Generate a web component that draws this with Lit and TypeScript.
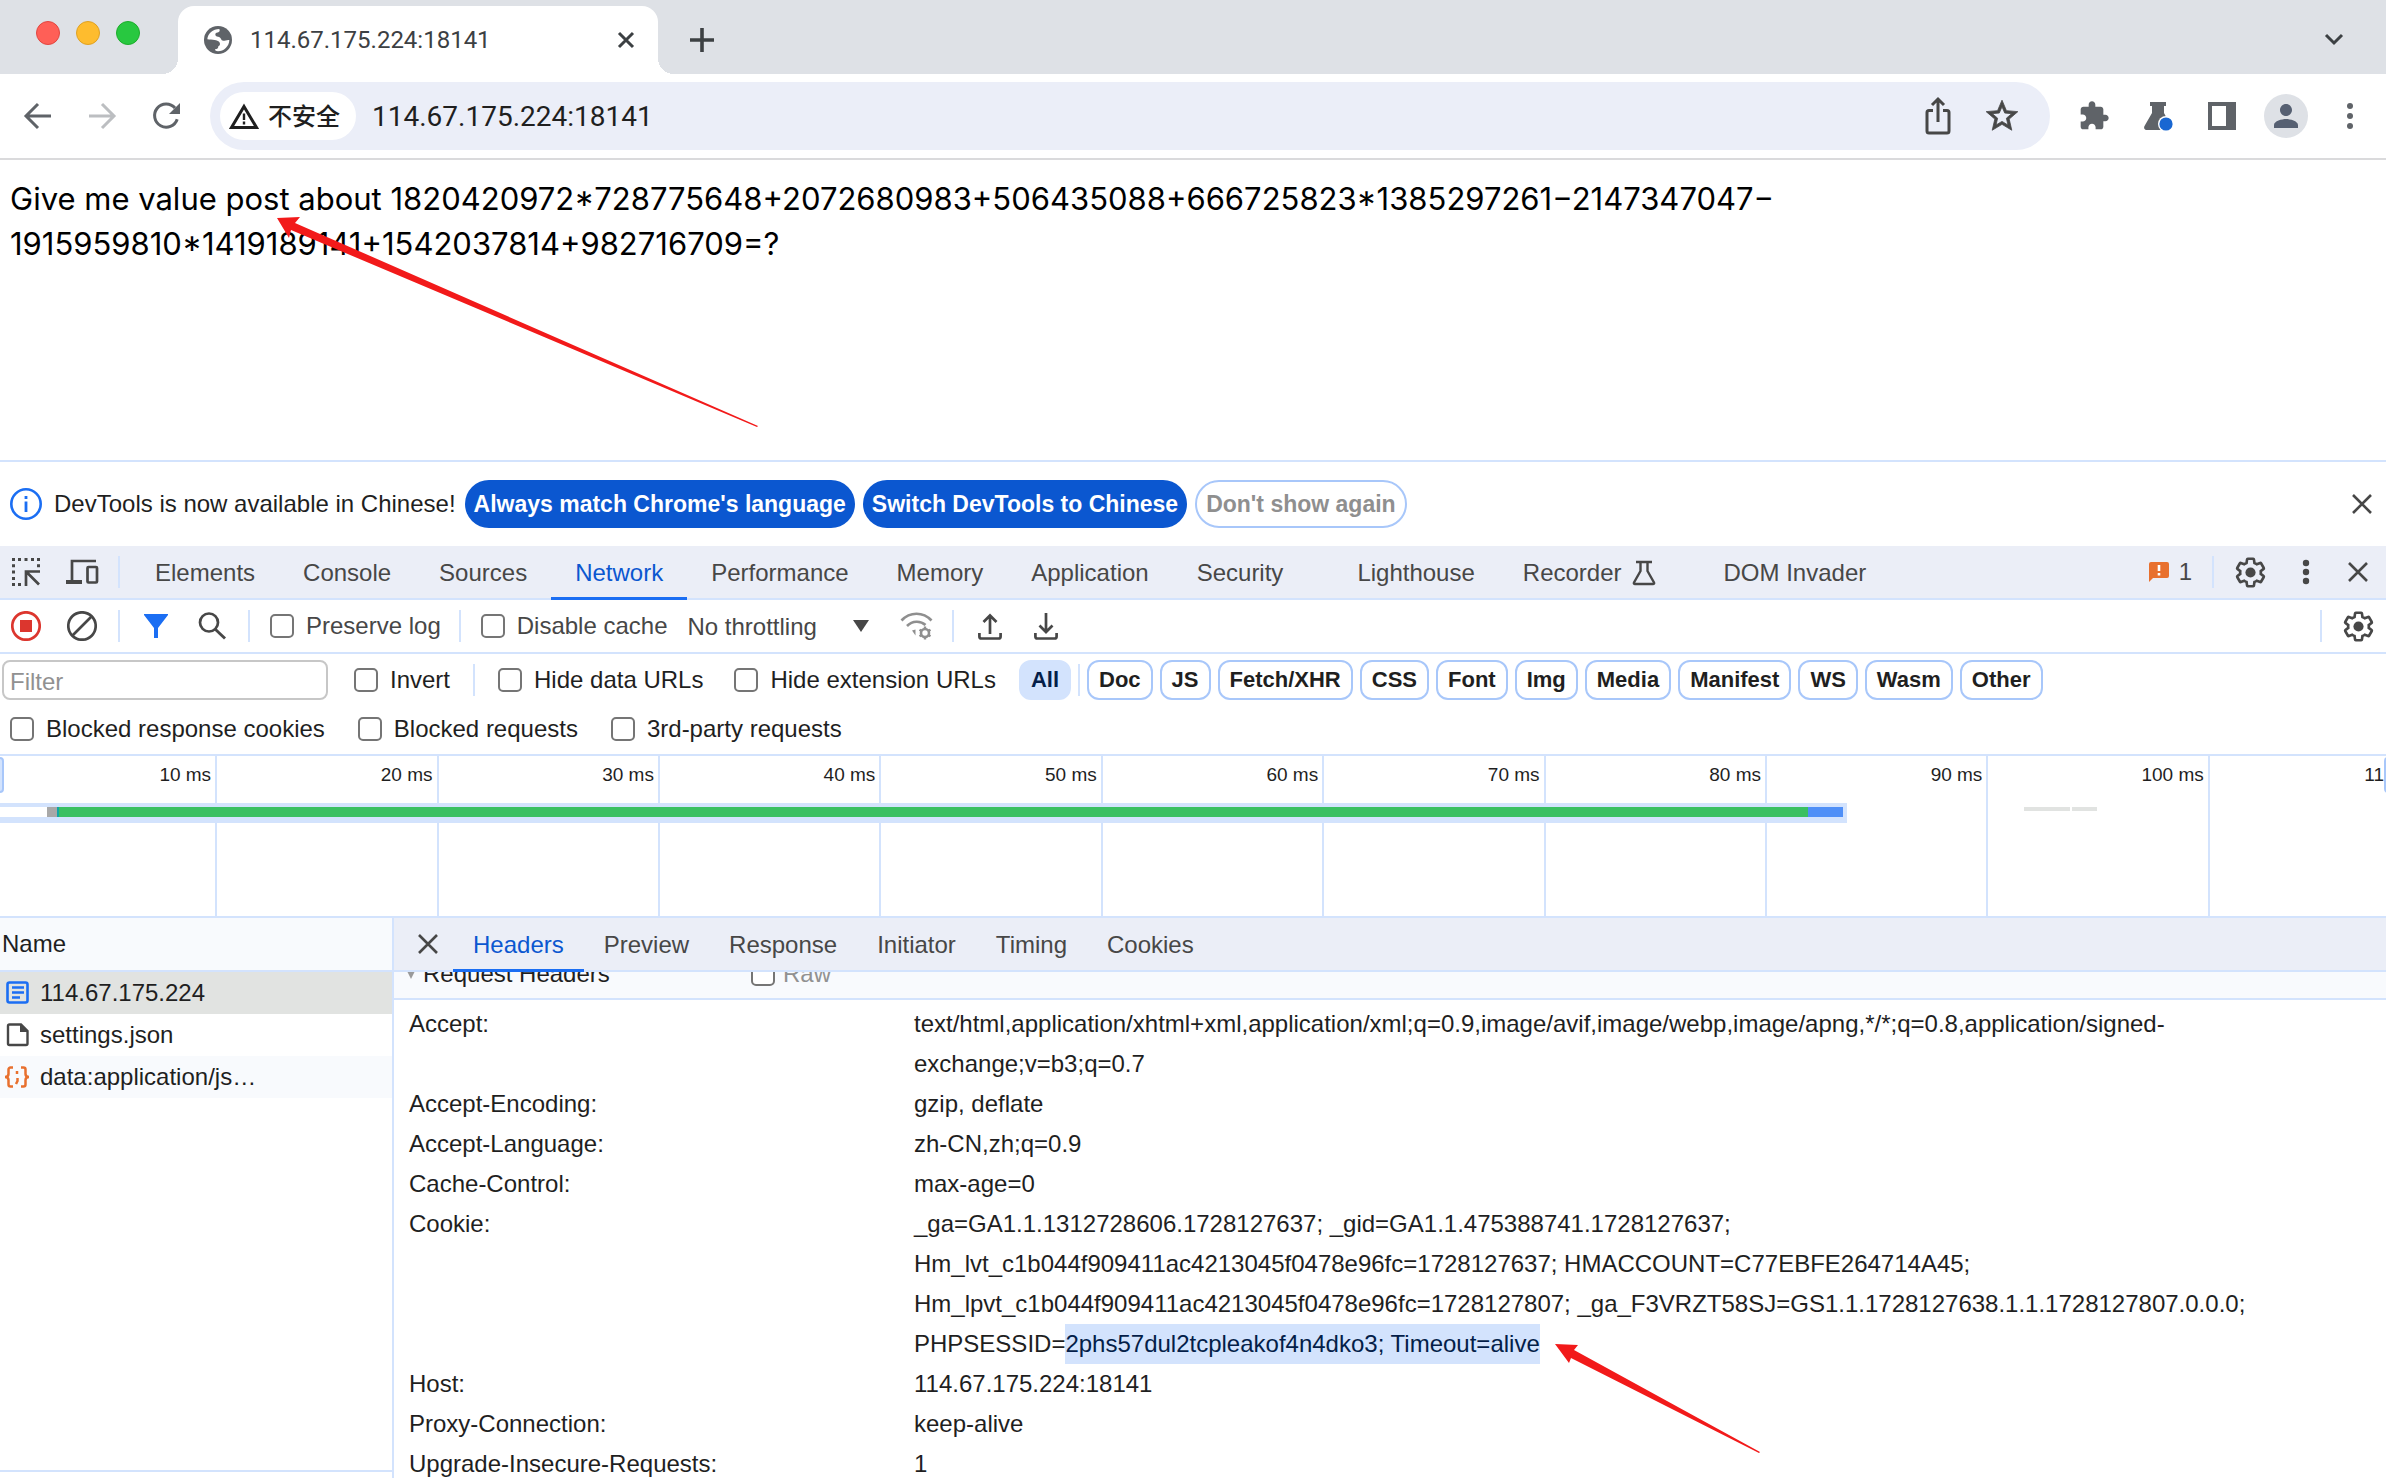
import { LitElement, html, css, svg, nothing } from "lit";
import type { TemplateResult } from "lit";
import { customElement } from "lit/decorators.js";
import { classMap } from "lit/directives/class-map.js";

const GEAR =
  "M19.43 12.98c.04-.32.07-.64.07-.98 0-.34-.03-.66-.07-.98l2.11-1.65c.19-.15.24-.42.12-.64l-2-3.46c-.09-.16-.26-.25-.44-.25-.06 0-.12.01-.17.03l-2.49 1c-.52-.4-1.08-.73-1.69-.98l-.38-2.65C14.46 2.18 14.25 2 14 2h-4c-.25 0-.46.18-.49.42l-.38 2.65c-.61.25-1.17.59-1.69.98l-2.49-1c-.06-.02-.12-.03-.18-.03-.17 0-.34.09-.43.25l-2 3.46c-.13.22-.07.49.12.64l2.11 1.65c-.04.32-.07.65-.07.98 0 .33.03.66.07.98l-2.11 1.65c-.19.15-.24.42-.12.64l2 3.46c.09.16.26.25.44.25.06 0 .12-.01.17-.03l2.49-1c.52.4 1.08.73 1.69.98l.38 2.65c.03.24.24.42.49.42h4c.25 0 .46-.18.49-.42l.38-2.65c.61-.25 1.17-.59 1.69-.98l2.49 1c.06.02.12.03.18.03.17 0 .34-.09.43-.25l2-3.46c.12-.22.07-.49-.12-.64l-2.11-1.65z";

const icon = (w: number, h: number, body: TemplateResult, box = `0 0 ${w} ${h}`) =>
  html`<svg width=${w} height=${h} viewBox=${box} fill="none" stroke="none" aria-hidden="true">${body}</svg>`;

const ICONS = {
  globe: icon(28, 28, svg`<circle cx="42" cy="42" r="42" fill="#5f6368"/><path fill="#fff" d="M10 40C11 22 27 9 46 9C49 15 46 20 38 20C31 22 34 32 42 32C52 32 50 44 58 44C65 45 71 42 76 42C76 61 59 76 42 76C36 76 33 74 33 70C40 70 43 66 43 61C49 59 49 52 46 48C40 42 26 42 10 40Z"/>`, "0 0 84 84"),
  tabClose: icon(18, 18, svg`<path d="M2 2l14 14M16 2L2 16" stroke="#3c4043" stroke-width="3"/>`),
  plus: icon(24, 24, svg`<path d="M12 0v24M0 12h24" stroke="#3c4043" stroke-width="3.600"/>`),
  chevron: icon(20, 14, svg`<path d="M2 2l8 8 8-8" stroke="#3c4043" stroke-width="3"/>`),
  back: icon(32, 32, svg`<path d="M29 16H5M16 4L4 16l12 12" stroke="#5f6368" stroke-width="3"/>`),
  forward: icon(32, 32, svg`<path d="M3 16h24M16 4l12 12-12 12" stroke="#bcbec1" stroke-width="3"/>`),
  reload: icon(32, 32, svg`<path d="M27.2 19.2A11.6 11.6 0 1 1 25 8" stroke="#5f6368" stroke-width="3"/><path d="M30 3v11H19z" fill="#5f6368"/>`),
  warning: icon(30, 26, svg`<path d="M15 3.5L27.5 24.500H2.500z" stroke="#1f1f1f" stroke-width="3"/><path d="M15 10.500v6.500M15 18.500v3" stroke="#1f1f1f" stroke-width="2.400"/>`),
  share: icon(28, 40, svg`<path d="M9 14.500H5a2 2 0 0 0-2 2V35a2 2 0 0 0 2 2h18a2 2 0 0 0 2-2V16.500a2 2 0 0 0-2-2h-4" stroke="#474747" stroke-width="3"/><path d="M14 26V4M8 9l6-6 6 6" stroke="#474747" stroke-width="3"/>`),
  star: icon(38, 38, svg`<path stroke="#474747" stroke-width=".5" fill="#474747" d="M22 9.240l-7.190-.62L12 2 9.190 8.630 2 9.240l5.460 4.730L5.820 21 12 17.270 18.180 21l-1.630-7.030L22 9.240zM12 15.400l-3.760 2.270 1-4.280-3.320-2.880 4.380-.38L12 6.100l1.710 4.040 4.380.38-3.320 2.880 1 4.280L12 15.400z"/>`, "0 0 24 24"),
  puzzle: icon(32, 32, svg`<path fill="#5f6368" d="M20.5 11H19V7c0-1.100-.9-2-2-2h-4V3.500C13 2.120 11.880 1 10.500 1S8 2.120 8 3.500V5H4c-1.100 0-1.990.9-1.990 2v3.800H3.500c1.490 0 2.700 1.210 2.700 2.700s-1.210 2.700-2.700 2.700H2V20c0 1.100.9 2 2 2h3.800v-1.500c0-1.490 1.210-2.700 2.700-2.700 1.490 0 2.700 1.210 2.700 2.700V22H17c1.100 0 2-.9 2-2v-4h1.500c1.380 0 2.500-1.120 2.500-2.500S21.880 11 20.500 11z"/>`, "0 0 24 24"),
  labs: icon(32, 32, svg`<path fill="#5f6368" d="M8 2h16v4h-2v7l7 13c1 2 0 4-2 4H5c-2.500 0-3.500-2-2.500-4L10 13V6H8z"/><circle cx="24" cy="24" r="8" fill="#fff"/><circle cx="24" cy="24" r="6.600" fill="#1967d2"/>`),
  sidePanel: icon(28, 28, svg`<path fill="#5f6368" fill-rule="evenodd" d="M0 0h28v28H0zM4 4v20h14V4z"/>`),
  person: icon(36, 36, svg`<path fill="#566072" d="M12 12c2.210 0 4-1.790 4-4s-1.790-4-4-4-4 1.790-4 4 1.790 4 4 4zm0 2c-2.670 0-8 1.340-8 4v2h16v-2c0-2.660-5.330-4-8-4z"/>`, "0 0 24 24"),
  dots: icon(8, 28, svg`<g fill="#5f6368"><circle cx="4" cy="4" r="3"/><circle cx="4" cy="14" r="3"/><circle cx="4" cy="24" r="3"/></g>`),
  info: icon(32, 32, svg`<circle cx="16" cy="16" r="14.700" stroke="#1b6ef3" stroke-width="2.600"/><path d="M16 13.500V24M16 8v3" stroke="#1b6ef3" stroke-width="2.800"/>`),
  close: icon(20, 20, svg`<path d="M1 1l18 18M19 1L1 19" stroke="#474747" stroke-width="2.600"/>`),
  inspect: icon(28, 28, svg`<path fill="#474747" d="M0 0h3v3H0zM6 0h3v3H6zM12.500 0h3v3h-3zM19 0h3v3h-3zM25 0h3v3h-3zM0 6.300h3v3H0zM0 12.500h3v3H0zM0 19h3v3H0zM0 25h3v3H0zM6 25h3v3H6zM25 6.300h3v3h-3z"/><path d="M28 13.500H14V28M14.500 14L27 26.500" stroke="#474747" stroke-width="2.700"/>`),
  device: icon(33, 26, svg`<path d="M30 2H6v20M0 22.500h16" stroke="#474747" stroke-width="2.700"/><path d="M0 21h16v4H0z" fill="#474747"/><rect x="21.500" y="8" width="9.500" height="15.500" rx="1" stroke="#474747" stroke-width="2.700"/>`),
  gear: icon(33, 33, svg`<path d=${GEAR} stroke="#474747" stroke-width="1.900"/><circle cx="12" cy="12" r="3.700" fill="#474747"/>`, "0 0 24 24"),
  menu: icon(8, 28, svg`<g fill="#474747"><circle cx="4" cy="5" r="3.200"/><circle cx="4" cy="14" r="3.200"/><circle cx="4" cy="23" r="3.200"/></g>`),
  flask: icon(24, 26, svg`<path d="M4 2h16M8.500 2v9L2 22.500c-.5 1 0 1.500 1 1.500h18c1 0 1.500-.5 1-1.500L15.500 11V2" stroke="#474747" stroke-width="2.400"/>`),
  issue: icon(20, 20, svg`<path fill="#e8702e" d="M2 0h16a2 2 0 0 1 2 2v12a2 2 0 0 1-2 2H4l-4 4V2a2 2 0 0 1 2-2z"/><path d="M10 3v6M10 11v2.500" stroke="#fff" stroke-width="2.600"/>`),
  record: icon(30, 30, svg`<circle cx="15" cy="15" r="13.700" stroke="#dc362e" stroke-width="2.700"/><rect x="9" y="9" width="12" height="12" fill="#dc362e"/>`),
  clear: icon(30, 30, svg`<circle cx="15" cy="15" r="13.700" stroke="#474747" stroke-width="2.700"/><path d="M24.500 5.500l-19 19" stroke="#474747" stroke-width="2.700"/>`),
  funnel: icon(24, 24, svg`<path fill="#1b6ef3" d="M0 0h24v1L14 14v10h-4V14L0 1z"/>`),
  search: icon(28, 28, svg`<circle cx="11" cy="10.500" r="9" stroke="#474747" stroke-width="2.700"/><path d="M17 17l10 9.500" stroke="#474747" stroke-width="2.900"/>`),
  caret: icon(16, 12, svg`<path fill="#474747" d="M0 0h16L8 12z"/>`),
  wifi: icon(33, 28, svg`<g stroke="#8f8f8f" stroke-width="2.700"><path d="M1.500 8.500C10-.5 23-.5 31.500 8.500"/><path d="M7 14c5.500-5.500 13.500-5.500 18.500-1"/></g><path d="M12 18.500l3.500-1v6z" fill="#8f8f8f"/><circle cx="25" cy="21" r="4" stroke="#8f8f8f" stroke-width="2.600"/><path d="M25 14.500v3M25 24.500v3M19.500 17.800l2.500 1.500M28 22.700l2.500 1.500M19.500 24.200l2.500-1.500M28 19.300l2.500-1.500" stroke="#8f8f8f" stroke-width="2.400"/>`),
  upload: icon(24, 27, svg`<path d="M12 21V2M5.500 9L12 2.500 18.500 9M1.400 20v3.500a2 2 0 0 0 2 2h17.200a2 2 0 0 0 2-2V20" stroke="#474747" stroke-width="2.700"/>`),
  download: icon(24, 27, svg`<path d="M12 0v19M5.500 12.500L12 19l6.500-6.500M1.400 20v3.500a2 2 0 0 0 2 2h17.200a2 2 0 0 0 2-2V20" stroke="#474747" stroke-width="2.700"/>`),
  doc: icon(24, 24, svg`<rect x="1.500" y="1.500" width="20" height="20" rx="2" stroke="#1b6ef3" stroke-width="2.600"/><path d="M6 6.500h12M6 11.500h12M6 16.500h8" stroke="#1b6ef3" stroke-width="2.400"/>`),
  page: icon(24, 24, svg`<path d="M2 3a1.500 1.500 0 0 1 1.500-1.500H15L21.500 8v12.500A1.500 1.500 0 0 1 20 22H3.500A1.500 1.500 0 0 1 2 20.500z" stroke="#474747" stroke-width="2.400"/><path d="M14 1v8h8z" fill="#474747"/>`),
  braces: icon(26, 22, svg`<g stroke="#e8702e" stroke-width="2.500"><path d="M9 1.500H6.500a2 2 0 0 0-2 2V8c0 2-1 3-3.500 3 2.500 0 3.500 1 3.500 3v4.500a2 2 0 0 0 2 2H9"/><path d="M17 1.500h2.500a2 2 0 0 1 2 2V8c0 2 1 3 3.500 3-2.500 0-3.500 1-3.500 3v4.500a2 2 0 0 1-2 2H17"/><path d="M13 5v3M13.500 12v3l-1.500 3"/></g>`),
  arrow: icon(482, 210, svg`<path fill="#f21a1a" d="M0 1L23 0 18 6 481 209 480 210 14 13 12 21z"/>`),
  arrowSmall: icon(206, 110, svg`<path fill="#f21a1a" d="M0 0L23 1 19 6 205 108 204 109 16 14 14 19z"/>`),
};

interface PanelTab { name: string; wide?: boolean; flask?: boolean }
const TABS: PanelTab[] = [
  { name: "Elements" }, { name: "Console" }, { name: "Sources" }, { name: "Network" },
  { name: "Performance" }, { name: "Memory" }, { name: "Application" },
  { name: "Security", wide: true }, { name: "Lighthouse" },
  { name: "Recorder", flask: true }, { name: "DOM Invader" },
];
const TYPES = ["Doc", "JS", "Fetch/XHR", "CSS", "Font", "Img", "Media", "Manifest", "WS", "Wasm", "Other"];
const DETAIL_TABS = ["Headers", "Preview", "Response", "Initiator", "Timing", "Cookies"];
const TICKS = [10, 20, 30, 40, 50, 60, 70, 80, 90, 100, 110];
const PHASES = [
  { kind: "wait", size: 47 }, { kind: "stall", size: 10 }, { kind: "connect", size: 2 },
  { kind: "ttfb", size: 1749 }, { kind: "receive", size: 35 },
];
const REQUESTS = [
  { name: "114.67.175.224", icon: ICONS.doc },
  { name: "settings.json", icon: ICONS.page },
  { name: "data:application/js…", icon: ICONS.braces },
];
const HEADERS: [string, (string | TemplateResult)[]][] = [
  ["Accept:", [
    "text/html,application/xhtml+xml,application/xml;q=0.9,image/avif,image/webp,image/apng,*/*;q=0.8,application/signed-",
    "exchange;v=b3;q=0.7",
  ]],
  ["Accept-Encoding:", ["gzip, deflate"]],
  ["Accept-Language:", ["zh-CN,zh;q=0.9"]],
  ["Cache-Control:", ["max-age=0"]],
  ["Cookie:", [
    "_ga=GA1.1.1312728606.1728127637; _gid=GA1.1.475388741.1728127637;",
    "Hm_lvt_c1b044f909411ac4213045f0478e96fc=1728127637; HMACCOUNT=C77EBFE264714A45;",
    "Hm_lpvt_c1b044f909411ac4213045f0478e96fc=1728127807; _ga_F3VRZT58SJ=GS1.1.1728127638.1.1.1728127807.0.0.0;",
    html`PHPSESSID=<mark class="picked">2phs57dul2tcpleakof4n4dko3; Timeout=alive<span class="pointer">${ICONS.arrowSmall}</span></mark>`,
  ]],
  ["Host:", ["114.67.175.224:18141"]],
  ["Proxy-Connection:", ["keep-alive"]],
  ["Upgrade-Insecure-Requests:", ["1"]],
];

const base = css`
  :host, *, *::before, *::after { box-sizing: border-box; }
  svg { display: block; flex: none; }
  button, input, select {
    font: inherit; color: inherit; margin: 0; padding: 0; border: 0; background: none;
    border-radius: 0; outline: none; white-space: nowrap;
  }
`;
const tools = css`
  .tool { flex: none; width: 56px; height: 48px; display: flex; align-items: center; justify-content: center; }
  .sep { flex: none; width: 2px; height: 32px; margin: 0 8px; background: #d3e3fd; }
  .fill { flex: 1; }
  .check { display: flex; align-items: center; gap: 12px; white-space: nowrap; }
  .box { appearance: none; flex: none; width: 24px; height: 24px; border: 2px solid #757575; border-radius: 5px; background: #fff; }
`;

@customElement("browser-chrome")
export class BrowserChrome extends LitElement {
  static styles = [base, css`
    :host { display: block; flex: none; font-family: Roboto, "Liberation Sans", sans-serif; }
    .strip { height: 74px; background: #dee1e6; display: flex; align-items: flex-end; padding-right: 42px; }
    .lights { display: flex; gap: 16px; padding: 0 38px 29px 36px; }
    .light { width: 24px; height: 24px; border-radius: 50%; border: 1px solid; }
    .red { background: #ff5f57; border-color: #e14640; }
    .yellow { background: #febc2e; border-color: #dfa123; }
    .green { background: #28c840; border-color: #1dad2b; }
    .tab {
      position: relative; width: 480px; height: 68px; background: #fff; border-radius: 16px 16px 0 0;
      display: flex; align-items: center; padding: 0 23px 0 26px; gap: 18px; font-size: 24px; color: #3c4043;
    }
    .tab::before, .tab::after { content: ""; position: absolute; bottom: 0; width: 16px; height: 16px; }
    .tab::before { right: 100%; background: radial-gradient(circle at 0 0, #dee1e6 16px, #fff 16px); }
    .tab::after { left: 100%; background: radial-gradient(circle at 100% 0, #dee1e6 16px, #fff 16px); }
    .title { flex: 1; white-space: nowrap; }
    .plain { height: 68px; display: flex; align-items: center; }
    .new { padding-left: 32px; }
    .fill { flex: 1; }
    .bar { height: 86px; border-bottom: 2px solid #dadadc; background: #fff; display: flex; align-items: center; padding: 0 4px 0 6px; }
    .nav { flex: none; width: 64px; height: 64px; display: flex; align-items: center; justify-content: center; }
    .omni { flex: 1; height: 68px; margin: 0 12px; padding: 0 16px 0 10px; border-radius: 34px; background: #ebeef8; display: flex; align-items: center; }
    .safety {
      flex: none; height: 48px; border-radius: 24px; background: #fff; padding: 0 16px 0 9px; display: flex; align-items: center; gap: 9px;
      font: 500 24px "Noto Sans CJK SC", sans-serif; color: #1f1f1f;
    }
    .state { padding-bottom: 3px; }
    .url { flex: 1; min-width: 0; height: 48px; padding-left: 16px; font-size: 28px; color: #1f1f1f; }
    .avatar { width: 44px; height: 44px; border-radius: 50%; background: #dee1e6; display: flex; align-items: center; justify-content: center; }
  `];

  render() {
    return html`
      <div class="strip">
        <div class="lights"><span class="light red"></span><span class="light yellow"></span><span class="light green"></span></div>
        <div class="tab">
          ${ICONS.globe}<span class="title">114.67.175.224:18141</span>
          <button aria-label="Close tab">${ICONS.tabClose}</button>
        </div>
        <button class="plain new" aria-label="New tab">${ICONS.plus}</button>
        <span class="fill"></span>
        <button class="plain" aria-label="Search tabs">${ICONS.chevron}</button>
      </div>
      <div class="bar">
        <button class="nav" aria-label="Back">${ICONS.back}</button>
        <button class="nav" aria-label="Forward">${ICONS.forward}</button>
        <button class="nav" aria-label="Reload">${ICONS.reload}</button>
        <div class="omni">
          <button class="safety">${ICONS.warning}<span class="state">不安全</span></button>
          <input class="url" type="text" aria-label="Address" value="114.67.175.224:18141" />
          <button class="nav" aria-label="Share">${ICONS.share}</button>
          <button class="nav" aria-label="Bookmark">${ICONS.star}</button>
        </div>
        <button class="nav" aria-label="Extensions">${ICONS.puzzle}</button>
        <button class="nav" aria-label="Experiments">${ICONS.labs}</button>
        <button class="nav" aria-label="Side panel">${ICONS.sidePanel}</button>
        <button class="nav" aria-label="Profile"><span class="avatar">${ICONS.person}</span></button>
        <button class="nav" aria-label="Menu">${ICONS.dots}</button>
      </div>`;
  }
}

@customElement("page-view")
export class PageView extends LitElement {
  static styles = [base, css`
    :host { display: block; flex: none; position: relative; height: 300px; padding: 16px 10px; background: #fff; }
    .text { margin: 0; font: 31px/45px Inter, "Liberation Sans", sans-serif; color: #000; white-space: nowrap; }
    .pointer { position: absolute; left: 277px; top: 57px; }
  `];

  render() {
    return html`
      <p class="text">Give me value post about 1820420972*728775648+2072680983+506435088+666725823*1385297261−2147347047−<br />1915959810*1419189141+1542037814+982716709=?</p>
      <span class="pointer">${ICONS.arrow}</span>`;
  }
}

@customElement("network-toolbar")
export class NetworkToolbar extends LitElement {
  static styles = [base, tools, css`
    :host { display: block; flex: none; }
    .info { height: 86px; border-top: 2px solid #d3e3fd; display: flex; align-items: center; gap: 8px; padding: 0 14px 0 10px; }
    .message { padding: 0 1px 0 4px; white-space: nowrap; }
    .pill { height: 48px; border-radius: 24px; padding: 0 9px; font-size: 23px; font-weight: 700; background: #0b57d0; color: #fff; }
    .ghost { background: #fff; color: #8f8f8f; border: 2px solid #a8c7fa; }
    .tabs { height: 54px; background: #ebeef7; border-bottom: 2px solid #d3e3fd; display: flex; align-items: center; color: #474747; }
    .tab { height: 54px; padding: 0 24px; display: flex; align-items: center; gap: 10px; border: solid transparent; border-width: 3px 0; margin-bottom: -2px; position: relative; }
    .first { margin-left: 3px; }
    .wide { margin-right: 26px; }
    .flask { margin-right: 20px; }
    .on { color: #0b57d0; border-bottom-color: #1b6ef3; }
    .issues { display: flex; align-items: center; gap: 10px; height: 48px; padding-right: 12px; }
    .edge { width: 52px; padding-right: 4px; }
    .lead { margin-left: -2px; }
    .row { height: 54px; border-bottom: 2px solid #d3e3fd; display: flex; align-items: center; color: #474747; }
    .row .check { margin: 0 10px 0 12px; }
    .throttle { appearance: none; width: 166px; height: 40px; margin-left: 10px; }
    .net { margin-left: 19px; }
    .filters { height: 52px; display: flex; align-items: center; gap: 7px; padding-left: 2px; }
    .filters .sep { margin: 0; }
    .filter { width: 326px; height: 40px; margin-right: 3px; border: 2px solid #c7c7c7; border-radius: 8px; padding: 3px 0 0 6px; background: #fff; }
    .filter::placeholder { color: #919191; opacity: 1; }
    .spaced { margin: 0 16px; }
    .last { margin: 0 16px 0 8px; }
    .chip { flex: none; height: 40px; padding: 0 10px; border: 2px solid #a8c7fa; border-radius: 12px; font-size: 22px; font-weight: 700; background: #fff; }
    .all { background: #d3e3fd; border-color: #d3e3fd; color: #041e49; }
    .more { height: 50px; padding: 0 10px 2px; border-bottom: 2px solid #d3e3fd; display: flex; align-items: center; gap: 33px; }
  `];

  private check(label: string, cls = "") {
    return html`<label class="check ${cls}"><input class="box" type="checkbox" />${label}</label>`;
  }

  render() {
    return html`
      <div class="info">
        ${ICONS.info}<span class="message">DevTools is now available in Chinese!</span>
        <button class="pill">Always match Chrome's language</button>
        <button class="pill">Switch DevTools to Chinese</button>
        <button class="pill ghost">Don't show again</button>
        <span class="fill"></span>
        <button aria-label="Close message">${ICONS.close}</button>
      </div>
      <nav class="tabs">
        <button class="tool lead" aria-label="Inspect">${ICONS.inspect}</button>
        <button class="tool" aria-label="Device toolbar">${ICONS.device}</button>
        <span class="sep"></span>
        ${TABS.map((t, i) => html`<button class=${classMap({ tab: true, first: i === 0, wide: !!t.wide, flask: !!t.flask, on: t.name === "Network" })}>${t.name}${t.flask ? ICONS.flask : nothing}</button>`)}
        <span class="fill"></span>
        <button class="issues" aria-label="Issues">${ICONS.issue}<span>1</span></button>
        <span class="sep"></span>
        <button class="tool" aria-label="Settings">${ICONS.gear}</button>
        <button class="tool" aria-label="More">${ICONS.menu}</button>
        <button class="tool edge" aria-label="Close DevTools">${ICONS.close}</button>
      </nav>
      <div class="row">
        <button class="tool lead" aria-label="Stop recording">${ICONS.record}</button>
        <button class="tool" aria-label="Clear">${ICONS.clear}</button>
        <span class="sep"></span>
        <button class="tool" aria-label="Filter">${ICONS.funnel}</button>
        <button class="tool" aria-label="Search">${ICONS.search}</button>
        <span class="sep"></span>
        ${this.check("Preserve log")}
        <span class="sep"></span>
        ${this.check("Disable cache")}
        <select class="throttle" aria-label="Throttling"><option>No throttling</option></select>
        ${ICONS.caret}
        <button class="tool net" aria-label="Network conditions">${ICONS.wifi}</button>
        <span class="sep"></span>
        <button class="tool" aria-label="Import">${ICONS.upload}</button>
        <button class="tool" aria-label="Export">${ICONS.download}</button>
        <span class="fill"></span>
        <span class="sep"></span>
        <button class="tool" aria-label="Network settings">${ICONS.gear}</button>
      </div>
      <div class="filters">
        <input class="filter" type="text" placeholder="Filter" aria-label="Filter" />
        ${this.check("Invert", "spaced")}
        <span class="sep"></span>
        ${this.check("Hide data URLs", "spaced")}
        ${this.check("Hide extension URLs", "last")}
        <button class="chip all">All</button>
        <span class="sep"></span>
        ${TYPES.map((t) => html`<button class="chip">${t}</button>`)}
      </div>
      <div class="more">
        ${this.check("Blocked response cookies")}
        ${this.check("Blocked requests")}
        ${this.check("3rd-party requests")}
      </div>`;
  }
}

@customElement("network-overview")
export class NetworkOverview extends LitElement {
  static styles = [base, css`
    :host { display: block; flex: none; position: relative; height: 162px; border-bottom: 2px solid #d3e3fd; overflow: hidden; }
    .grid { display: flex; height: 160px; }
    .tick { flex: 0 0 9.28%; border-right: 2px solid #d3e3fd; padding: 7px 4px 0 0; text-align: right; font-size: 19px; line-height: 24px; white-space: nowrap; }
    .tick:first-child { flex-basis: 9.1%; }
    .request { position: absolute; left: 0; top: 47px; width: 77.4%; height: 20px; padding: 4px 4px 6px 0; background: #d3e3fd; display: flex; }
    .wait { background: #fff; }
    .stall { background: #a8a8a8; }
    .connect { background: #12a5a5; }
    .ttfb { background: #3ac062; }
    .receive { background: #4f8ff7; }
    .cached { position: absolute; left: 84.83%; top: 51px; display: flex; gap: 2px; }
    .cached i { height: 4px; width: 46px; background: #e1e3e1; }
    .cached i + i { width: 25px; }
    .handle { position: absolute; top: 1px; width: 8px; height: 36px; border: 2px solid #a8c7fa; border-radius: 6px; background: #d3e3fd; }
    .start { left: -4px; }
    .end { right: -6px; }
  `];

  render() {
    const total = PHASES.reduce((sum, p) => sum + p.size, 0);
    return html`
      <div class="grid">${TICKS.map((t) => html`<div class="tick">${t} ms</div>`)}</div>
      <div class="request">${PHASES.map((p) => html`<span class=${p.kind} style="width:${(p.size / total) * 100}%"></span>`)}</div>
      <div class="cached"><i></i><i></i></div>
      <span class="handle start"></span><span class="handle end"></span>`;
  }
}

@customElement("request-list")
export class RequestList extends LitElement {
  static styles = [base, css`
    :host { flex: none; width: 394px; border-right: 2px solid #d3e3fd; display: flex; flex-direction: column; justify-content: space-between; background: #fff; }
    .list { width: 100%; border-collapse: separate; border-spacing: 0; }
    .head { height: 54px; padding: 0 2px; text-align: left; font-weight: 400; background: #f8fafd; border-bottom: 2px solid #d3e3fd; }
    .cell { height: 42px; padding: 0; }
    .name { display: flex; align-items: center; padding-left: 6px; }
    .glyph { width: 34px; }
    .glyph.shift { margin: 0 2px 0 -2px; }
    .item:nth-child(odd) { background: #f8fafd; }
    .item:first-child { background: #e1e3e1; }
    .status { height: 8px; border-top: 2px solid #d3e3fd; }
  `];

  render() {
    return html`
      <table class="list">
        <thead><tr><th class="head">Name</th></tr></thead>
        <tbody>${REQUESTS.map((r, i) => html`<tr class="item"><td class="cell"><span class="name"><span class="glyph ${i === 2 ? "shift" : ""}">${r.icon}</span>${r.name}</span></td></tr>`)}</tbody>
      </table>
      <div class="status"></div>`;
  }
}

@customElement("request-details")
export class RequestDetails extends LitElement {
  static styles = [base, tools, css`
    :host { flex: 1; min-width: 0; display: flex; flex-direction: column; overflow: hidden; background: #fff; }
    .tabs { flex: none; position: relative; z-index: 1; height: 54px; background: #ebeef7; border-bottom: 2px solid #d3e3fd; display: flex; align-items: center; color: #474747; padding-left: 24px; }
    .tab { height: 54px; margin-bottom: -2px; padding: 0 20px; border: solid transparent; border-width: 3px 0; }
    .close { margin-right: 15px; }
    .on { color: #0b57d0; border-bottom-color: #1b6ef3; }
    .section { flex: none; height: 54px; margin-top: -26px; padding: 4px 12px 0; background: #f8fafd; border-bottom: 2px solid #d3e3fd; display: flex; align-items: center; }
    .title { display: flex; align-items: center; gap: 7px; width: 345px; white-space: nowrap; }
    .title::before { content: ""; border: solid transparent; border-width: 10px 5px 0; border-top-color: #9a9a9a; }
    .check { gap: 8px; color: #919191; }
    .list { margin: 0; padding: 4px 0 0 15px; display: grid; grid-template-columns: 505px 1fr; line-height: 40px; }
    .key, .value { margin: 0; white-space: nowrap; }
    .picked { position: relative; display: inline-block; height: 40px; background: #d3e3fd; color: #041e49; }
    .pointer { position: absolute; left: 100%; top: 20px; padding-left: 15px; }
  `];

  render() {
    return html`
      <nav class="tabs">
        <button class="close" aria-label="Close details">${ICONS.close}</button>
        ${DETAIL_TABS.map((t) => html`<button class=${classMap({ tab: true, on: t === "Headers" })}>${t}</button>`)}
      </nav>
      <div class="section">
        <span class="title">Request Headers</span>
        <label class="check"><input class="box" type="checkbox" />Raw</label>
      </div>
      <dl class="list">
        ${HEADERS.map(([key, lines]) => html`<dt class="key">${key}</dt><dd class="value">${lines.map((l) => html`<div>${l}</div>`)}</dd>`)}
      </dl>`;
  }
}

@customElement("app-root")
export class AppRoot extends LitElement {
  static styles = css`
    :host {
      display: flex; flex-direction: column; height: 100vh; overflow: hidden; background: #fff;
      font-family: "Liberation Sans", Arial, sans-serif; font-size: 24px; color: #1f1f1f;
    }
    .lower { flex: 1; min-height: 0; display: flex; }
  `;

  render() {
    return html`
      <browser-chrome></browser-chrome>
      <page-view></page-view>
      <network-toolbar></network-toolbar>
      <network-overview></network-overview>
      <div class="lower">
        <request-list></request-list>
        <request-details></request-details>
      </div>`;
  }
}
